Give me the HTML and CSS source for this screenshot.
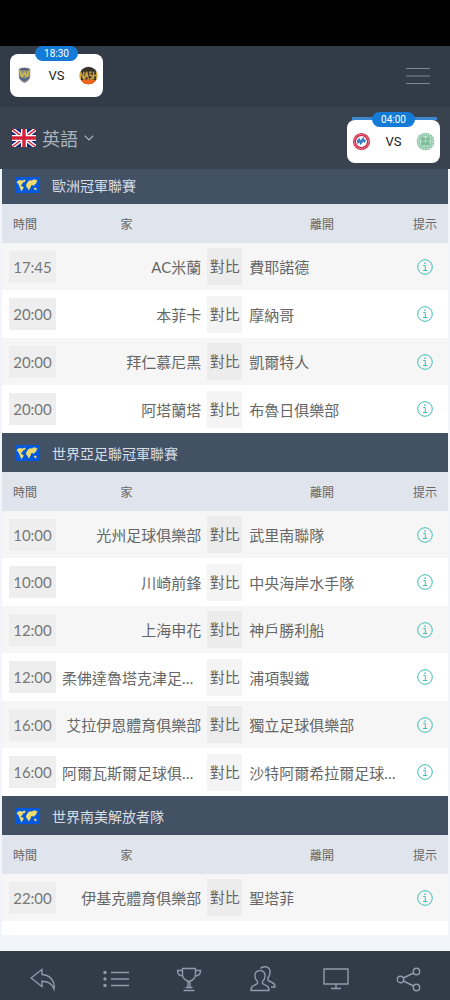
FILE: index.html
```html
<!DOCTYPE html>
<html lang="zh-Hant">
<head>
    <meta charset="UTF-8">
    <meta name="viewport" content="width=device-width, initial-scale=1.0">
    <title>足球比賽</title>
    <link rel="stylesheet" href="styles.css">
</head>
<body>
    <!-- Shared icons -->
    <svg class="sprite" aria-hidden="true">
        <symbol id="map" viewBox="0 0 24 16">
            <rect width="24" height="16" fill="#0459dc"/>
            <path fill="#eedb6c" d="M1.500 5.500L3 3.500l3-.6 1.500.8L9 2.600l1.700.6-1 1.800-1.700.6L7 7.500l-1.500.8 1.200.8 2 1.200-.4 1.500-1.300 1.500-.6 1.200-1-2.500-.8-2L4 8.500 3 6.500z"/>
            <path fill="#eedb6c" d="M11 8l.8-1.400 1-1.800 2-1.500 2.200.3 2-1.300 2.500.7 1 1-1 1-.3 1.800-1.500.8-.7 1.500-1-1.200-1.200.6-1-.6.3 1.800-1 1.200-.6 1.800-1 .6-.9-2.200-1.300-1.300zM18.600 11.500l1.400-1 1.500 1 .2 1.300-1.200.4z"/>
        </symbol>
        <symbol id="info" viewBox="0 0 16 16">
            <g fill="none" stroke="#3dbfb4">
                <circle cx="8" cy="8" r="7.300"/>
                <path d="M6.300 6.500h2v5M6 11.500h4.300"/>
                <path d="M7.300 4.200h1.400" stroke-width="1.400"/>
            </g>
        </symbol>
    </svg>

    <div class="status-bar"></div>

    <header class="top-bar">
        <a class="match-card" href="#">
            <span class="match-time">18:30</span>
            <svg class="team-logo" viewBox="0 0 20 20">
                <path d="M4 3q6-3 12 0v8q-1 5-6 7-5-2-6-7z" fill="#85898d"/>
                <path d="M5.500 5l1.500 7 3-5 3 5 1.500-7" fill="none" stroke="#c9b64f" stroke-width="2"/>
                <path d="M5 12l5 3 5-3" fill="none" stroke="#4a628a" stroke-width="2"/>
                <path d="M6 3.500h8" stroke="#445672" stroke-width="1.500"/>
            </svg>
            <span class="match-vs">VS</span>
            <svg class="team-logo" viewBox="0 0 20 20">
                <circle cx="10" cy="10" r="9.300" fill="#38312a"/>
                <path d="M2 15q8-2 16 0-3 4.300-8 4.300T2 15z" fill="#ee641d"/>
                <path d="M1.500 14V6l3.500 8V6M6 14L8 6l2 8M7 11h2M13.700 6.500h-2.200v3.500h2.200v3.500h-2.500M15.300 6v8M18.500 6v8M15 10h3.500" fill="none" stroke="#cfa640" stroke-width="1.400"/>
            </svg>
        </a>
        <button class="menu-button" type="button" aria-label="選單">
            <svg width="24" height="18" viewBox="0 0 24 18"><path d="M0 1.500h24M0 9h24M0 16.500h24" stroke="#7f8994"/></svg>
        </button>
    </header>

    <div class="language-bar">
        <button class="language-button" type="button">
            <svg width="24" height="18" viewBox="0 0 24 18">
                <rect width="24" height="18" fill="#1b2a78"/>
                <path d="M0 0l24 18M24 0L0 18" stroke="#fff" stroke-width="4"/>
                <path d="M0 0l24 18M24 0L0 18" stroke="#d3213a" stroke-width="1.400"/>
                <path d="M12 0v18M0 9h24" stroke="#fff" stroke-width="6"/>
                <path d="M12 0v18M0 9h24" stroke="#d3213a" stroke-width="3.400"/>
            </svg>
            <span>英語</span>
            <svg width="10" height="6" viewBox="0 0 10 6"><path d="M.7.7L5 5 9.300.7" fill="none" stroke="#b0b7bf" stroke-width="1.200"/></svg>
        </button>
        <a class="match-card match-card-next" href="#">
            <span class="match-time">04:00</span>
            <svg class="team-logo" viewBox="0 0 20 20">
                <circle cx="10" cy="10" r="9" fill="#cf3350"/>
                <circle cx="10" cy="10" r="7.500" fill="none" stroke="#eea8b5" stroke-dasharray="1.500 1"/>
                <circle cx="10" cy="10" r="5.700" fill="#fff"/>
                <path d="M5 9l3-3 1 3 3-4 1 3 2 0-2 4-1-2-3 4-1-3-2 2z" fill="#397fc2"/>
            </svg>
            <span class="match-vs">VS</span>
            <svg class="team-logo" viewBox="0 0 20 20">
                <circle cx="10" cy="10" r="9.300" fill="#8ec8aa"/>
                <circle cx="10" cy="10" r="7.700" fill="none" stroke="#e1f2e9" stroke-dasharray="1.500 1"/>
                <circle cx="10" cy="10" r="6" fill="#c4e3d2"/>
                <g fill="#7dbd9a"><circle cx="7.500" cy="7.500" r="2.300"/><circle cx="12.500" cy="7.500" r="2.300"/><circle cx="7.500" cy="12" r="2.300"/><circle cx="12.500" cy="12" r="2.300"/></g>
                <path d="M10 10v6" stroke="#7dbd9a"/>
            </svg>
        </a>
    </div>

    <main class="content">
        <div class="leagues">
            <section>
                <h2 class="league-title"><svg class="flag"><use href="#map"/></svg>歐洲冠軍聯賽</h2>
                <table class="matches">
                    <thead>
                        <tr><th class="col-time">時間</th><th class="col-home">家</th><th class="col-vs"></th><th class="col-away">離開</th><th class="col-tip">提示</th></tr>
                    </thead>
                    <tbody>
                        <tr><td><span class="time">17:45</span></td><td class="home">AC米蘭</td><td><span class="vs">對比</span></td><td class="away">費耶諾德</td><td class="tip"><a href="#" aria-label="提示"><svg><use href="#info"/></svg></a></td></tr>
                        <tr><td><span class="time">20:00</span></td><td class="home">本菲卡</td><td><span class="vs">對比</span></td><td class="away">摩納哥</td><td class="tip"><a href="#" aria-label="提示"><svg><use href="#info"/></svg></a></td></tr>
                        <tr><td><span class="time">20:00</span></td><td class="home">拜仁慕尼黑</td><td><span class="vs">對比</span></td><td class="away">凱爾特人</td><td class="tip"><a href="#" aria-label="提示"><svg><use href="#info"/></svg></a></td></tr>
                        <tr><td><span class="time">20:00</span></td><td class="home">阿塔蘭塔</td><td><span class="vs">對比</span></td><td class="away">布魯日俱樂部</td><td class="tip"><a href="#" aria-label="提示"><svg><use href="#info"/></svg></a></td></tr>
                    </tbody>
                </table>
            </section>

            <section>
                <h2 class="league-title"><svg class="flag"><use href="#map"/></svg>世界亞足聯冠軍聯賽</h2>
                <table class="matches">
                    <thead>
                        <tr><th class="col-time">時間</th><th class="col-home">家</th><th class="col-vs"></th><th class="col-away">離開</th><th class="col-tip">提示</th></tr>
                    </thead>
                    <tbody>
                        <tr><td><span class="time">10:00</span></td><td class="home">光州足球俱樂部</td><td><span class="vs">對比</span></td><td class="away">武里南聯隊</td><td class="tip"><a href="#" aria-label="提示"><svg><use href="#info"/></svg></a></td></tr>
                        <tr><td><span class="time">10:00</span></td><td class="home">川崎前鋒</td><td><span class="vs">對比</span></td><td class="away">中央海岸水手隊</td><td class="tip"><a href="#" aria-label="提示"><svg><use href="#info"/></svg></a></td></tr>
                        <tr><td><span class="time">12:00</span></td><td class="home">上海申花</td><td><span class="vs">對比</span></td><td class="away">神戶勝利船</td><td class="tip"><a href="#" aria-label="提示"><svg><use href="#info"/></svg></a></td></tr>
                        <tr><td><span class="time">12:00</span></td><td class="home">柔佛達魯塔克津足球俱樂部</td><td><span class="vs">對比</span></td><td class="away">浦項製鐵</td><td class="tip"><a href="#" aria-label="提示"><svg><use href="#info"/></svg></a></td></tr>
                        <tr><td><span class="time">16:00</span></td><td class="home">艾拉伊恩體育俱樂部</td><td><span class="vs">對比</span></td><td class="away">獨立足球俱樂部</td><td class="tip"><a href="#" aria-label="提示"><svg><use href="#info"/></svg></a></td></tr>
                        <tr><td><span class="time">16:00</span></td><td class="home">阿爾瓦斯爾足球俱樂部</td><td><span class="vs">對比</span></td><td class="away">沙特阿爾希拉爾足球俱樂部</td><td class="tip"><a href="#" aria-label="提示"><svg><use href="#info"/></svg></a></td></tr>
                    </tbody>
                </table>
            </section>

            <section>
                <h2 class="league-title"><svg class="flag"><use href="#map"/></svg>世界南美解放者隊</h2>
                <table class="matches">
                    <thead>
                        <tr><th class="col-time">時間</th><th class="col-home">家</th><th class="col-vs"></th><th class="col-away">離開</th><th class="col-tip">提示</th></tr>
                    </thead>
                    <tbody>
                        <tr><td><span class="time">22:00</span></td><td class="home">伊基克體育俱樂部</td><td><span class="vs">對比</span></td><td class="away">聖塔菲</td><td class="tip"><a href="#" aria-label="提示"><svg><use href="#info"/></svg></a></td></tr>
                    </tbody>
                </table>
            </section>
        </div>
    </main>

    <nav class="bottom-nav">
        <a href="#" aria-label="返回"><svg viewBox="0 0 26 26"><path d="M12 3.500L1 12l11 8.500v-5.200c6 0 10 2 12 7.700 1.500-8-4-14-12-14.500z"/></svg></a>
        <a href="#" aria-label="列表"><svg viewBox="0 0 26 26"><path d="M8 6.500h18M8 13h18M8 19.500h18"/><g class="dots"><circle cx="2" cy="6.500" r="1.700"/><circle cx="2" cy="13" r="1.700"/><circle cx="2" cy="19.500" r="1.700"/></g></svg></a>
        <a href="#" aria-label="獎盃"><svg viewBox="0 0 26 26"><path d="M6.500 2.500h13v6q0 5-6.500 7-6.500-2-6.500-7zM6.500 4.500h-5c0 4 1.500 5.500 5.500 5.500M19.500 4.500h5c0 4-1.500 5.500-5.500 5.500M12 15.500v6M14 15.500v6M9.500 21.500h7M7.500 24.500h11"/></svg></a>
        <a href="#" aria-label="球隊"><svg viewBox="0 0 26 26"><path d="M10 4.500c-3.500 0-5.500 2.500-5 6 .3 2.600 1.200 4 2.500 5v2L3 20q-2 1-2 4.500h18q0-3.500-2-4.500l-4.500-2.500v-2c1.300-1 2.200-2.400 2.500-5 .5-3.500-1.500-6-5-6zM10.500 2.500C12 .5 17 0 19 2.500c2 2.300 1 7-1 9.500v2.500l4 2q3 1 3 4.500h-4"/></svg></a>
        <a href="#" aria-label="直播"><svg viewBox="0 0 26 26"><path d="M1 3h24v15H1zM13 18v4.500M8 22.500h10"/></svg></a>
        <a href="#" aria-label="分享"><svg viewBox="0 0 26 26"><circle cx="4.500" cy="13.500" r="3.200"/><circle cx="20.500" cy="5.500" r="3.200"/><circle cx="20.500" cy="21.500" r="3.200"/><path d="M7.400 12l10.200-5M7.400 15l10.200 5"/></svg></a>
    </nav>
</body>
</html>
```

FILE: styles.css
```css
* {
    box-sizing: border-box;
}

body {
    display: flex;
    flex-direction: column;
    min-height: 100vh;
    margin: 0;
    background-color: #f2f5f9;
    color: #666;
    font-family: Lato, "Noto Sans CJK TC", sans-serif;
    font-size: 15px;
}

a {
    color: inherit;
    text-decoration: none;
}

button {
    padding: 0;
    border: none;
    background: none;
    font: inherit;
    cursor: pointer;
}

svg {
    display: block;
}

.sprite {
    position: absolute;
    width: 0;
    height: 0;
}

/* Header */
.status-bar {
    height: 46px;
    background-color: #000;
}

.top-bar,
.language-bar {
    display: flex;
    align-items: center;
    justify-content: space-between;
    padding: 0 10px;
}

.top-bar {
    height: 61px;
    padding-right: 20px;
    padding-bottom: 2px;
    background-color: #323b48;
}

.language-bar {
    height: 62px;
    padding-top: 6px;
    padding-left: 12px;
    background-color: #38434f;
    position: relative;
    z-index: 1;
}

.language-button {
    display: flex;
    align-items: center;
    gap: 6px;
    margin-bottom: 6px;
    color: #a9b1ba;
    font-size: 18px;
}

/* Match cards, the kick-off time sits on the top edge */
.match-card {
    position: relative;
    display: flex;
    align-items: center;
    justify-content: space-between;
    width: 93px;
    height: 43px;
    padding: 0 5px;
    border-radius: 8px;
    background-color: #fff;
    color: #222;
    font-family: Roboto, sans-serif;
}

.match-card-next::before {
    content: "";
    position: absolute;
    top: -3px;
    left: 5px;
    right: 3px;
    height: 3px;
    background-color: #3a86cf;
}

.match-time {
    position: absolute;
    top: -8px;
    left: 25px;
    width: 43px;
    border-radius: 8px;
    background-color: #147bd6;
    color: #fff;
    font-size: 10px;
    line-height: 15px;
    text-align: center;
}

.match-vs {
    font-size: 13px;
}

.team-logo {
    width: 19px;
    height: 19px;
}

/* Match lists */
.content {
    flex: 1;
    overflow: hidden;
}

.leagues {
    margin: -4px 2px 16px;
    padding-bottom: 14px;
    background-color: #fff;
}

.league-title {
    display: flex;
    align-items: center;
    gap: 13px;
    height: 39px;
    margin: 0;
    padding-left: 13px;
    background-color: #435165;
    color: #d9dde2;
    font-size: 14px;
    font-weight: 400;
}

.flag {
    width: 24px;
    height: 16px;
}

.matches {
    width: 100%;
    table-layout: fixed;
    border-collapse: collapse;
}

th {
    height: 39px;
    padding: 0;
    background-color: #e0e5ed;
    font-size: 12px;
    font-weight: 400;
}

td {
    height: 47px;
    padding: 0;
}

tbody tr:nth-child(odd) {
    background-color: #f6f6f6;
}

tbody tr:nth-child(even) td {
    height: 48px;
}

.col-time {
    width: 58px;
    padding-right: 12px;
}

.col-home {
    width: 33%;
    padding-right: 14px;
}

.col-vs {
    width: 35px;
}

.col-tip {
    width: 46px;
}

.time {
    display: block;
    width: 47px;
    margin-left: 7px;
    background-color: #eee;
    color: #777;
    line-height: 32px;
    text-align: center;
}

.home,
.away {
    overflow: hidden;
    text-overflow: ellipsis;
    white-space: nowrap;
}

.home {
    padding-left: 2px;
    padding-right: 6px;
    text-align: right;
}

.away {
    padding-left: 7px;
}

.vs {
    display: block;
    background-color: #ececec;
    line-height: 37px;
    text-align: center;
}

tr:nth-child(even) .vs {
    background-color: #f4f4f4;
}

.tip svg {
    width: 16px;
    height: 16px;
    margin: 0 auto;
}

/* Bottom navigation */
.bottom-nav {
    position: sticky;
    bottom: 0;
    display: flex;
    align-items: center;
    justify-content: space-around;
    height: 49px;
    padding: 6px 4px 0 6px;
    background-color: #323b48;
}

.bottom-nav svg {
    width: 26px;
    height: 26px;
    fill: none;
    stroke: #8f9bab;
    stroke-width: 1.4;
}

.bottom-nav .dots {
    fill: #8f9bab;
    stroke: none;
}
```
